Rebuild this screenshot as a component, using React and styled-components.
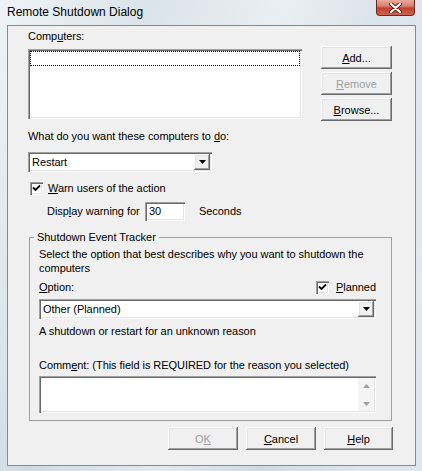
import React from 'react';
import styled, { createGlobalStyle, css } from 'styled-components';

const GlobalStyle = createGlobalStyle`
  html, body {
    margin: 0;
    padding: 0;
  }
  body {
    width: 422px;
    height: 471px;
    overflow: hidden;
    font-family: "Liberation Sans", Arial, sans-serif;
  }
`;

const sunken = css`
  background: #fff;
  box-shadow: inset 1px 1px 0 #a0a0a0, inset 2px 2px 0 #696969,
    inset -1px -1px 0 #fff, inset -2px -2px 0 #e3e3e3;
`;

const raised = css`
  background: #f0f0f0;
  box-shadow: inset -1px -1px 0 #696969, inset 1px 1px 0 #fff,
    inset -2px -2px 0 #a0a0a0, inset 2px 2px 0 #e3e3e3;
`;

const Frame = styled.div`
  width: 422px;
  height: 471px;
  box-sizing: border-box;
  display: flex;
  flex-direction: column;
  padding: 0 6px 5px 7px;
  background:
    linear-gradient(105deg, rgba(255,255,255,0.55) 0%, rgba(255,255,255,0) 28%, rgba(255,255,255,0.4) 52%, rgba(255,255,255,0) 70%, rgba(255,255,255,0.3) 90%),
    linear-gradient(180deg, #dbe4eb 0%, #cfdbe4 100%);
`;

const TitleBar = styled.div`
  height: 25px;
  display: flex;
  align-items: flex-start;
`;

const Title = styled.div`
  padding-top: 5px;
  font-size: 12px;
  line-height: 15px;
  color: #000;
`;

const CloseButton = styled.div`
  margin-left: auto;
  margin-right: 1px;
  width: 39px;
  height: 16px;
  box-sizing: border-box;
  border: 1px solid #6b2a20;
  border-top: none;
  border-radius: 0 0 4px 4px;
  background: linear-gradient(180deg, #e8aa9c 0%, #d98070 40%, #c2412e 55%, #cf6450 100%);
  display: flex;
  align-items: center;
  justify-content: center;
`;

const Client = styled.div`
  flex: 1;
  background: #f0f0f0;
  border: 1px solid #7f8b95;
  padding: 4px 0 0 20px;
  display: flex;
  flex-direction: column;
  font-size: 11px;
  line-height: 13px;
  letter-spacing: -0.05px;
  color: #000;
`;

const U = styled.span`
  text-decoration: underline;
  text-underline-offset: 1px;
`;

const Text = styled.div`
  font-size: 11px;
  line-height: ${p => p.$lh || 13}px;
  margin-top: ${p => p.$mt || 0}px;
  margin-left: ${p => p.$ml || 0}px;
  color: ${p => (p.$disabled ? '#a0a0a0' : '#000')};
  white-space: nowrap;
`;

const TopGrid = styled.div`
  display: grid;
  grid-template-columns: 274px 71px;
  column-gap: 19px;
  align-items: start;
`;

const Column = styled.div`
  display: flex;
  flex-direction: column;
  gap: ${p => p.$gap || 0}px;
  padding-top: ${p => p.$pt || 0}px;
`;

const ListBox = styled.div`
  ${sunken};
  margin-top: 6px;
  height: 70px;
  padding: 2px;
  box-sizing: border-box;
`;

const FocusRow = styled.div`
  height: 13px;
  border: 1px dotted #000;
`;

const Button = styled.button`
  ${raised};
  width: ${p => p.$w || 71}px;
  height: 23px;
  border: none;
  padding: 0;
  font-family: inherit;
  font-size: 11px;
  color: ${p => (p.disabled ? '#a0a0a0' : '#000')};
`;

const Combo = styled.div`
  ${sunken};
  width: ${p => p.$w}px;
  height: 20px;
  margin-top: ${p => p.$mt || 0}px;
  padding: 2px;
  box-sizing: border-box;
  display: flex;
  align-items: center;
`;

const ComboText = styled.span`
  flex: 1;
  padding-left: 2px;
`;

const ArrowBox = styled.div`
  ${raised};
  width: 16px;
  height: 16px;
  display: flex;
  align-items: center;
  justify-content: center;
`;

const Row = styled.div`
  display: flex;
  align-items: center;
  gap: ${p => p.$gap || 0}px;
  margin-top: ${p => p.$mt || 0}px;
  margin-left: ${p => p.$ml || 0}px;
  height: ${p => p.$h || 13}px;
`;

const Box = styled.span`
  ${sunken};
  width: 13px;
  height: 13px;
  display: inline-flex;
  align-items: center;
  justify-content: center;
  flex-shrink: 0;
`;

const Label = styled.span`
  width: ${p => p.$w}px;
`;

const NumField = styled.div`
  ${sunken};
  width: 40px;
  height: 19px;
  box-sizing: border-box;
  padding: 3px 0 0 4px;
  margin-right: 14px;
`;

const Group = styled.fieldset`
  margin: 10px 0 0 1px;
  padding: 3px 0 7px 0;
  width: 363px;
  box-sizing: border-box;
  border: 1px solid #a0a0a0;
  min-width: 0;
`;

const Legend = styled.legend`
  margin-left: 4px;
  padding: 0 3px;
  font-size: 11px;
  line-height: 13px;
`;

const GroupBody = styled.div`
  padding-left: 9px;
  display: flex;
  flex-direction: column;
`;

const SpreadRow = styled.div`
  width: 337px;
  height: 14px;
  margin-top: 5px;
  display: flex;
  align-items: center;
  justify-content: space-between;
`;

const CheckLabel = styled.span`
  display: inline-flex;
  align-items: center;
  gap: 7px;
`;

const MemoBox = styled.div`
  ${sunken};
  width: 337px;
  height: 37px;
  margin-top: 4px;
  padding: 2px;
  box-sizing: border-box;
  display: flex;
  justify-content: flex-end;
`;

const ScrollTrack = styled.div`
  width: 16px;
  background: #f4f4f4;
  display: flex;
  flex-direction: column;
  align-items: center;
  justify-content: space-between;
  padding: 6px 0 5px;
  box-sizing: border-box;
`;

const Footer = styled.div`
  width: 365px;
  margin-top: 6px;
  display: flex;
  justify-content: flex-end;
  gap: 8px;
`;

const Check = () => (
  <svg width="9" height="9" viewBox="0 0 9 9">
    <path d="M1 3.5 L3.5 6 L8 1.5" fill="none" stroke="#000" strokeWidth="1.8" />
  </svg>
);

const Arrow = ({ up, color = '#000' }) => (
  <svg width="7" height="4" viewBox="0 0 7 4">
    <polygon points={up ? '0,4 7,4 3.5,0' : '0,0 7,0 3.5,4'} fill={color} />
  </svg>
);

const Dropdown = ({ width, mt, children }) => (
  <Combo $w={width} $mt={mt}>
    <ComboText>{children}</ComboText>
    <ArrowBox>
      <Arrow />
    </ArrowBox>
  </Combo>
);

export default function App() {
  return (
    <>
      <GlobalStyle />
      <Frame>
        <TitleBar>
          <Title>Remote Shutdown Dialog</Title>
          <CloseButton>
            <svg width="13" height="10" viewBox="0 0 13 10">
              <path d="M2 1 L11 9 M11 1 L2 9" stroke="#5a2018" strokeWidth="4" strokeLinecap="round" />
              <path d="M2 1 L11 9 M11 1 L2 9" stroke="#fff" strokeWidth="2.2" strokeLinecap="round" />
            </svg>
          </CloseButton>
        </TitleBar>
        <Client>
          <TopGrid>
            <Column>
              <Text>
                Comp<U>u</U>ters:
              </Text>
              <ListBox>
                <FocusRow />
              </ListBox>
            </Column>
            <Column $pt={16} $gap={3}>
              <Button>
                <U>A</U>dd...
              </Button>
              <Button disabled>
                <U>R</U>emove
              </Button>
              <Button>
                <U>B</U>rowse...
              </Button>
            </Column>
          </TopGrid>

          <Text $mt={9}>
            What do you want these computers to <U>d</U>o:
          </Text>
          <Dropdown width={184} mt={9}>Restart</Dropdown>

          <Row $mt={10} $ml={2} $gap={5}>
            <Box>
              <Check />
            </Box>
            <span>
              <U>W</U>arn users of the action
            </span>
          </Row>

          <Row $mt={7} $ml={19} $h={19}>
            <Label $w={98}>
              Disp<U>l</U>ay warning for
            </Label>
            <NumField>30</NumField>
            <span>Seconds</span>
          </Row>

          <Group>
            <Legend>Shutdown Event Tracker</Legend>
            <GroupBody>
              <Text $lh={14}>Select the option that best describes why you want to shutdown the</Text>
              <Text $lh={14}>computers</Text>
              <SpreadRow>
                <span>
                  <U>O</U>ption:
                </span>
                <CheckLabel>
                  <Box>
                    <Check />
                  </Box>
                  <span>
                    <U>P</U>lanned
                  </span>
                </CheckLabel>
              </SpreadRow>
              <Dropdown width={337} mt={5}>Other (Planned)</Dropdown>
              <Text $mt={6}>A shutdown or restart for an unknown reason</Text>
              <Text $mt={21}>
                Comm<U>e</U>nt: (This field is REQUIRED for the reason you selected)
              </Text>
              <MemoBox>
                <ScrollTrack>
                  <Arrow up color="#a0a0a0" />
                  <Arrow color="#a0a0a0" />
                </ScrollTrack>
              </MemoBox>
            </GroupBody>
          </Group>

          <Footer>
            <Button $w={70} disabled>
              O<U>K</U>
            </Button>
            <Button $w={70}>
              <U>C</U>ancel
            </Button>
            <Button $w={69}>
              <U>H</U>elp
            </Button>
          </Footer>
        </Client>
      </Frame>
    </>
  );
}
